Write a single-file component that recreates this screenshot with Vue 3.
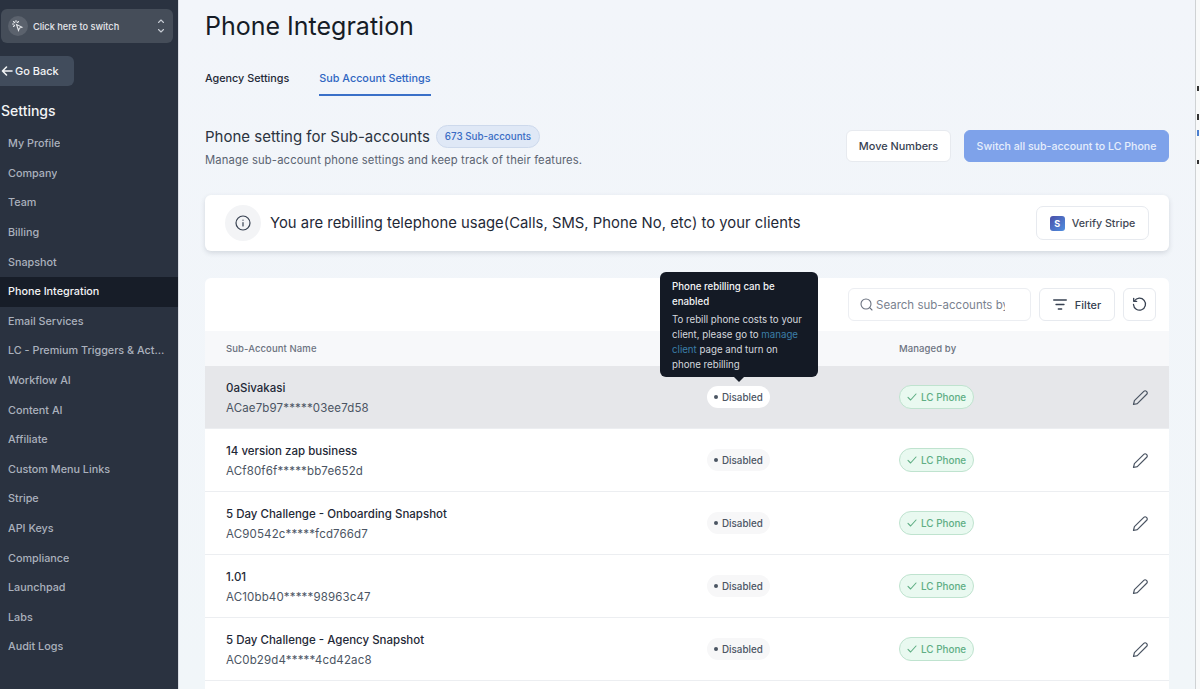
<script setup>
const menu = ['My Profile','Company','Team','Billing','Snapshot','Phone Integration','Email Services','LC - Premium Triggers & Actions','Workflow AI','Content AI','Affiliate','Custom Menu Links','Stripe','API Keys','Compliance','Launchpad','Labs','Audit Logs']
const rows = [
  { name: '0aSivakasi', sid: 'ACae7b97*****03ee7d58', hover: true },
  { name: '14 version zap business', sid: 'ACf80f6f*****bb7e652d' },
  { name: '5 Day Challenge - Onboarding Snapshot', sid: 'AC90542c*****fcd766d7' },
  { name: '1.01', sid: 'AC10bb40*****98963c47' },
  { name: '5 Day Challenge - Agency Snapshot', sid: 'AC0b29d4*****4cd42ac8' },
  { name: '', sid: '' }
]
</script>

<template>
  <div class="page">
    <aside class="sidebar">
      <div class="switcher">
        <span class="sw-icon">
          <svg width="14" height="14" viewBox="0 0 14 14" fill="none" stroke="#e5e7eb" stroke-width="1.1" stroke-linecap="round"><path d="M5.5 5.5l2 6 1-2.4 2.4-1z"/><path d="M5 1.5v1.5M1.5 5H3M2.5 2.5l1 1M7.5 2.5l-1 1M2.5 7.5l1-1"/></svg>
        </span>
        <span class="sw-text">Click here to switch</span>
        <svg class="sw-caret" width="8" height="16" viewBox="0 0 8 16" fill="none" stroke="#c6cbd3" stroke-width="1.1" stroke-linecap="round" stroke-linejoin="round"><path d="M1.5 4.5L4 2l2.5 2.5M1.5 11.5L4 14l2.5-2.5"/></svg>
      </div>
      <div class="back">
        <svg width="12" height="12" viewBox="0 0 12 12" fill="none" stroke="#f3f4f6" stroke-width="1.6" stroke-linecap="round" stroke-linejoin="round"><path d="M11 6H1.5M5.5 2L1.5 6l4 4"/></svg>
        <span>Go Back</span>
      </div>
      <div class="settings">Settings</div>
      <nav class="menu">
        <div v-for="m in menu" :key="m" class="item" :class="{ active: m === 'Phone Integration' }">
          <span class="item-text">{{ m }}</span>
        </div>
      </nav>
    </aside>

    <main class="main">
      <h1 class="title">Phone Integration</h1>
      <div class="tabs">
        <span class="tab">Agency Settings</span>
        <span class="tab on">Sub Account Settings</span>
      </div>

      <div class="head">
        <div>
          <div class="head-line">
            <span class="head-title">Phone setting for Sub-accounts</span>
            <span class="count">673 Sub-accounts</span>
          </div>
          <div class="head-sub">Manage sub-account phone settings and keep track of their features.</div>
        </div>
        <div class="head-actions">
          <button class="btn move">Move Numbers</button>
          <button class="btn primary">Switch all sub-account to LC Phone</button>
        </div>
      </div>

      <div class="banner">
        <span class="info">
          <svg width="16" height="16" viewBox="0 0 16 16" fill="none" stroke="#374151" stroke-width="1.2" stroke-linecap="round"><circle cx="8" cy="8" r="7"/><path d="M8 7.5v3.5M8 5v.2"/></svg>
        </span>
        <span class="banner-text">You are rebilling telephone usage(Calls, SMS, Phone No, etc) to your clients</span>
        <button class="btn verify">
          <span class="stripe">S</span>
          Verify Stripe
        </button>
      </div>

      <section class="card">
        <div class="toolbar">
          <div class="search">
            <svg class="search-icon" width="13" height="13" viewBox="0 0 13 13" fill="none" stroke="#6b7280" stroke-width="1.1" stroke-linecap="round"><circle cx="6" cy="6" r="5"/><path d="M9.7 9.7l2.3 2.3"/></svg>
            <span class="search-text">Search sub-accounts by name</span>
          </div>
          <button class="btn filter">
            <svg width="14" height="11" viewBox="0 0 14 11" fill="none" stroke="#374151" stroke-width="1.3" stroke-linecap="round"><path d="M.7 1h12.6M3 5.5h8M5.3 10h3.4"/></svg>
            Filter
          </button>
          <button class="btn reset">
            <svg width="15" height="15" viewBox="0 0 15 15" fill="none" stroke="#374151" stroke-width="1.3" stroke-linecap="round" stroke-linejoin="round"><path d="M2.4 4A6 6 0 1 1 1.5 7.500"/><path d="M1.700 1.300v3h3"/></svg>
          </button>
        </div>

        <div class="grid thead">
          <span>Sub-Account Name</span>
          <span></span>
          <span>Managed by</span>
          <span></span>
        </div>

        <div v-for="(r, i) in rows" :key="i" class="grid row" :class="{ hover: r.hover }">
          <div v-if="r.name" class="name-cell">
            <div class="name">{{ r.name }}</div>
            <div class="sid">{{ r.sid }}</div>
          </div>
          <div v-if="r.name" class="pill-cell"><span class="disabled"><i class="dot"></i>Disabled</span></div>
          <div v-if="r.name" class="pill-cell">
            <span class="lc">
              <svg width="10" height="8" viewBox="0 0 10 8" fill="none" stroke="#5fae84" stroke-width="1.1" stroke-linecap="round" stroke-linejoin="round"><path d="M1 4.300L3.600 7 9 1"/></svg>
              LC Phone
            </span>
          </div>
          <div v-if="r.name" class="edit">
            <svg width="17" height="17" viewBox="0 0 17 17" fill="none" stroke="#4b5563" stroke-width="1.2" stroke-linejoin="round"><path d="M1.500 15.500l.9-3.800L11.800 2.300a1.800 1.800 0 0 1 2.600 0l.3.300a1.800 1.800 0 0 1 0 2.600L5.300 14.600z"/></svg>
          </div>
        </div>

        <div class="tooltip">
          <div class="tip-title">Phone rebilling can be enabled</div>
          <div class="tip-body">To rebill phone costs to your client, please go to <span class="tip-link">manage client</span> page and turn on phone rebilling</div>
        </div>
      </section>
    </main>

    <div class="edge">
      <i class="m1"></i><i class="m2"></i><i class="m3"></i><i class="m4"></i>
    </div>
  </div>
</template>

<style>
html, body { margin: 0; background: #f3f6fa; }
</style>

<style scoped>
.page {
  display: flex;
  width: 1200px;
  height: 689px;
  overflow: hidden;
  position: relative;
  font-family: Inter, "Liberation Sans", sans-serif;
  background: linear-gradient(180deg, #f2f5fa 0%, #f1f6f9 100%);
  color: #111827;
}
.sidebar {
  width: 178px;
  flex: none;
  background: #2a3240;
  padding-top: 9px;
  border-right: 1px solid #d9dde4;
  box-sizing: content-box;
}
.switcher {
  height: 34px;
  margin: 0 5px 0 1px;
  background: #454d59;
  border-radius: 6px;
  display: flex;
  align-items: center;
  padding-left: 7px;
  padding-right: 8px;
}
.sw-icon {
  width: 20px;
  height: 20px;
  border-radius: 50%;
  background: #5b626d;
  display: flex;
  align-items: center;
  justify-content: center;
  flex: none;
}
.sw-text { margin-left: 5px; font-size: 9.200px; font-weight: 500; color: #e5e7eb; flex: 1; white-space: nowrap; }
.sw-caret { flex: none; }
.back {
  margin-top: 13px;
  width: 74px;
  height: 30px;
  background: #414c5c;
  border-radius: 0 6px 6px 0;
  display: flex;
  align-items: center;
  gap: 2px;
  padding-left: 1px;
  box-sizing: border-box;
  font-size: 11px;
  font-weight: 500;
  color: #f3f4f6;
}
.settings {
  margin-top: 15px;
  padding-left: 1px;
  font-size: 14px;
  font-weight: 500;
  line-height: 20px;
  color: #f3f4f6;
}
.menu { margin-top: 8px; }
.item {
  height: 29.600px;
  display: flex;
  align-items: center;
  padding: 0 13px 0 8px;
  font-size: 10.800px;
  font-weight: 500;
  color: #aab1bd;
}
.item-text { overflow: hidden; text-overflow: ellipsis; white-space: nowrap; }
.item.active { background: #171d28; color: #f3f4f6; }
.main {
  flex: 1;
  min-width: 0;
  padding: 0 31px 0 26px;
}
.title {
  margin: 10px 0 0;
  font-size: 25px;
  font-weight: 400;
  line-height: 32px;
  color: #161c26;
}
.tabs {
  margin-top: 14px;
  display: flex;
  gap: 30px;
}
.tab {
  font-size: 10.800px;
  font-weight: 500;
  color: #1f2937;
  height: 40px;
  line-height: 46px;
  box-sizing: border-box;
}
.tab.on { color: #2f66c2; border-bottom: 2px solid #3a70c8; }
.head {
  margin-top: 28px;
  display: flex;
  justify-content: space-between;
  align-items: flex-start;
}
.head-line { display: flex; align-items: center; gap: 6px; height: 24px; }
.head-title { font-size: 15px; color: #2b3340; }
.count {
  height: 23px;
  line-height: 21px;
  box-sizing: border-box;
  padding: 0 8px;
  font-size: 9.800px;
  font-weight: 500;
  color: #3a6cc4;
  background: #dfe8f6;
  border: 1px solid #cdd9ec;
  border-radius: 12px;
}
.head-sub { margin-top: 5px; font-size: 11.250px; color: #5a6371; letter-spacing: .13px; }
.head-actions { display: flex; gap: 13px; margin-top: 6px; }
.btn {
  font-family: inherit;
  border-radius: 6px;
  background: #fff;
  border: 1px solid #e7eaef;
  font-size: 10.900px;
  font-weight: 500;
  color: #374151;
  padding: 0;
  box-sizing: border-box;
  display: inline-flex;
  align-items: center;
  justify-content: center;
}
.move { width: 105px; height: 32px; }
.primary {
  width: 205px;
  height: 32px;
  background: #7ea2ea;
  border-color: #7ea2ea;
  color: #e6eefc;
  font-size: 10.600px;
}
.banner {
  margin-top: 28px;
  height: 56px;
  background: #fff;
  border-radius: 6px;
  box-shadow: 0 2px 5px rgba(50, 60, 80, .16);
  display: flex;
  align-items: center;
  padding: 0 20px;
}
.info {
  width: 36px;
  height: 36px;
  border-radius: 50%;
  background: #f3f4f6;
  display: flex;
  align-items: center;
  justify-content: center;
  flex: none;
}
.banner-text { margin-left: 9px; font-size: 14.800px; color: #1f2937; flex: 1; white-space: nowrap; letter-spacing: .03px; }
.verify { width: 113px; height: 34px; gap: 7px; color: #3f4754; border-radius: 7px; font-size: 10.700px; }
.stripe {
  width: 15px;
  height: 15px;
  border-radius: 3px;
  background: linear-gradient(135deg, #4a4fa8, #4f8fe0);
  color: #fff;
  font-size: 9px;
  font-weight: 700;
  display: flex;
  align-items: center;
  justify-content: center;
}
.card {
  position: relative;
  margin-top: 27px;
  background: #fff;
  border-radius: 6px 6px 0 0;
}
.toolbar {
  height: 53px;
  display: flex;
  align-items: center;
  justify-content: flex-end;
  gap: 8px;
  padding-right: 13px;
  box-sizing: border-box;
}
.search {
  width: 183px;
  height: 33px;
  box-sizing: border-box;
  border: 1px solid #eceef2;
  border-radius: 6px;
  display: flex;
  align-items: center;
  gap: 3px;
  padding: 0 25px 0 11px;
  overflow: hidden;
}
.search-icon { flex: none; }
.search-text { font-size: 11.500px; color: #7a828f; white-space: nowrap; overflow: hidden; }
.filter { width: 76px; height: 33px; gap: 8px; }
.reset { width: 33px; height: 33px; }
.grid {
  display: grid;
  grid-template-columns: 481px 192px 1fr 50px;
  align-items: center;
  padding-left: 21px;
}
.thead { height: 35px; background: #f7f8fa; font-size: 9.500px; font-weight: 500; color: #6b7280; letter-spacing: .1px; }
.row { height: 63px; border-bottom: 1px solid #eceef1; box-sizing: border-box; }
.row.hover { background: #e6e7ea; }
.name-cell { margin-top: 2px; }
.pill-cell { display: flex; }
.name { font-size: 11.500px; font-weight: 500; color: #1f2937; line-height: 16px; }
.sid { margin-top: 4px; font-size: 11.500px; color: #4b5563; line-height: 16px; letter-spacing: .15px; }
.disabled {
  display: inline-flex;
  align-items: center;
  gap: 4px;
  height: 22px;
  padding: 0 7px;
  border-radius: 11px;
  background: #f7f7f8;
  font-size: 9.800px;
  font-weight: 500;
  color: #4b5563;
}
.hover .disabled { background: #fff; }
.dot { width: 4px; height: 4px; border-radius: 50%; background: #4b5563; }
.lc {
  display: inline-flex;
  align-items: center;
  gap: 4px;
  height: 24px;
  box-sizing: border-box;
  padding: 0 7px;
  border-radius: 12px;
  background: #e9f9f0;
  border: 1px solid #bfe3cf;
  font-size: 9.900px;
  font-weight: 500;
  color: #5fae84;
}
.edit { display: flex; justify-content: flex-end; padding-right: 20px; }
.tooltip {
  position: absolute;
  left: 455px;
  top: -6px;
  width: 158px;
  height: 105px;
  box-sizing: border-box;
  padding: 7px 12px;
  background: #141a25;
  border-radius: 6px;
  color: #e5e7eb;
  font-size: 9.700px;
  line-height: 15px;
}
.tooltip::after {
  content: "";
  position: absolute;
  left: 74px;
  bottom: -5px;
  border-left: 5px solid transparent;
  border-right: 5px solid transparent;
  border-top: 5px solid #141a25;
}
.tip-title { font-weight: 500; color: #f3f4f6; }
.tip-body { margin-top: 3px; color: #d5d8de; }
.tip-link { color: #3b7ea8; }
.edge {
  position: absolute;
  right: 0;
  top: 0;
  bottom: 0;
  width: 5px;
  background: #f9fafa;
  border-left: 1.500px solid #cfd2d4;
  box-sizing: border-box;
}
.edge i { position: absolute; left: 1px; width: 2px; background: #333; }
.edge .m1 { top: 86px; height: 5px; }
.edge .m2 { top: 114px; height: 6px; }
.edge .m3 { top: 130px; height: 6px; background: #4a7fd0; }
.edge .m4 { top: 160px; height: 4px; }
</style>
